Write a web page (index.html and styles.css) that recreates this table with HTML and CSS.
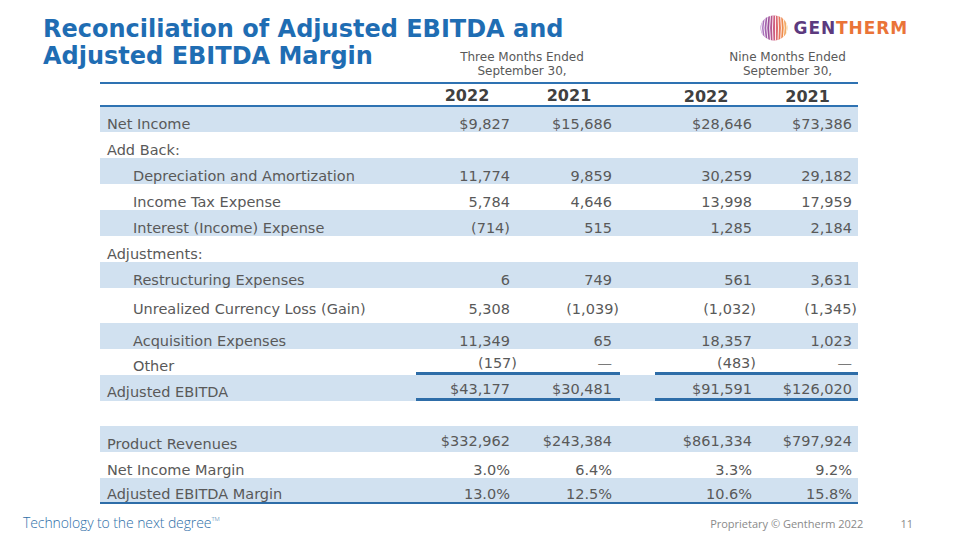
FILE: index.html
```html
<!DOCTYPE html>
<html lang="en">
<head>
<meta charset="utf-8">
<title>Reconciliation of Adjusted EBITDA</title>
<link rel="stylesheet" href="styles.css">
</head>
<body>
<div class="slide">
  <header class="top">
    <h1 class="title">Reconciliation of Adjusted EBITDA and<br>Adjusted EBITDA Margin</h1>
    <div class="logo">
      <svg class="sphere" width="28" height="26" viewBox="0 0 28 26">
        <defs>
          <clipPath id="ball"><ellipse cx="14" cy="13" rx="13.5" ry="12.5"/></clipPath>
          <linearGradient id="sg" x1="0" y1="0" x2="1" y2="0">
            <stop offset="0" stop-color="#b48ad0"/>
            <stop offset="0.3" stop-color="#9a4f9c"/>
            <stop offset="0.55" stop-color="#d9607a"/>
            <stop offset="0.8" stop-color="#ef8a4a"/>
            <stop offset="1" stop-color="#f6c77a"/>
          </linearGradient>
        </defs>
        <g clip-path="url(#ball)">
          <rect x="0" y="0" width="28" height="26" fill="url(#sg)"/>
          <g fill="none" stroke="#fff" stroke-width="0.9">
            <path d="M3 0 Q0 13 3 26"/>
            <path d="M5.5 0 Q2.5 13 5.5 26"/>
            <path d="M8 0 Q5.5 13 8 26"/>
            <path d="M10.5 0 Q8.8 13 10.5 26"/>
            <path d="M13 0 Q12 13 13 26"/>
            <path d="M15.5 0 Q15.5 13 15.5 26"/>
            <path d="M18 0 Q19 13 18 26"/>
            <path d="M20.5 0 Q22.3 13 20.5 26"/>
            <path d="M23 0 Q25.5 13 23 26"/>
            <path d="M25.5 0 Q28.5 13 25.5 26"/>
          </g>
        </g>
      </svg>
      <span class="brand"><span class="gen">GEN</span><span class="therm">THERM</span></span>
    </div>
  </header>

  <table class="recon">
    <colgroup>
      <col class="c-label">
      <col class="c-val">
      <col class="c-val">
      <col class="c-gap">
      <col class="c-val">
      <col class="c-val4">
    </colgroup>
    <thead>
      <tr class="period">
        <th></th>
        <th colspan="2" class="p3">Three Months Ended<br>September 30,</th>
        <th></th>
        <th colspan="2" class="p9">Nine Months Ended<br>September 30,</th>
      </tr>
      <tr class="years">
        <th></th>
        <th>2022</th>
        <th>2021</th>
        <th></th>
        <th class="low">2022</th>
        <th class="low">2021</th>
      </tr>
    </thead>
    <tbody>
      <tr class="band r25">
        <td class="lbl">Net Income</td>
        <td class="num">$9,827</td><td class="num">$15,686</td><td></td><td class="num">$28,646</td><td class="num">$73,386</td>
      </tr>
      <tr>
        <td class="lbl">Add Back:</td>
        <td></td><td></td><td></td><td></td><td></td>
      </tr>
      <tr class="band">
        <td class="ind">Depreciation and Amortization</td>
        <td class="num">11,774</td><td class="num">9,859</td><td></td><td class="num">30,259</td><td class="num">29,182</td>
      </tr>
      <tr>
        <td class="ind">Income Tax Expense</td>
        <td class="num">5,784</td><td class="num">4,646</td><td></td><td class="num">13,998</td><td class="num">17,959</td>
      </tr>
      <tr class="band">
        <td class="ind">Interest (Income) Expense</td>
        <td class="num">(714)</td><td class="num">515</td><td></td><td class="num">1,285</td><td class="num">2,184</td>
      </tr>
      <tr>
        <td class="lbl">Adjustments:</td>
        <td></td><td></td><td></td><td></td><td></td>
      </tr>
      <tr class="band">
        <td class="ind">Restructuring Expenses</td>
        <td class="num">6</td><td class="num">749</td><td></td><td class="num">561</td><td class="num">3,631</td>
      </tr>
      <tr class="tall">
        <td class="ind">Unrealized Currency Loss (Gain)</td>
        <td class="num">5,308</td><td class="num h">(1,039)</td><td></td><td class="num h">(1,032)</td><td class="num h">(1,345)</td>
      </tr>
      <tr class="band">
        <td class="ind">Acquisition Expenses</td>
        <td class="num">11,349</td><td class="num">65</td><td></td><td class="num">18,357</td><td class="num">1,023</td>
      </tr>
      <tr class="other">
        <td class="ind">Other</td>
        <td class="num h rule">(157)</td><td class="num rule dash">—</td><td></td><td class="num h rule">(483)</td><td class="num rule dash">—</td>
      </tr>
      <tr class="band total">
        <td class="lbl">Adjusted EBITDA</td>
        <td class="num rule">$43,177</td><td class="num rule">$30,481</td><td></td><td class="num rule">$91,591</td><td class="num rule">$126,020</td>
      </tr>
      <tr class="r25">
        <td></td><td></td><td></td><td></td><td></td><td></td>
      </tr>
      <tr class="band rev">
        <td class="lbl">Product Revenues</td>
        <td class="num">$332,962</td><td class="num">$243,384</td><td></td><td class="num">$861,334</td><td class="num">$797,924</td>
      </tr>
      <tr>
        <td class="lbl">Net Income Margin</td>
        <td class="num">3.0%</td><td class="num">6.4%</td><td></td><td class="num">3.3%</td><td class="num">9.2%</td>
      </tr>
      <tr class="band last">
        <td class="lbl">Adjusted EBITDA Margin</td>
        <td class="num">13.0%</td><td class="num">12.5%</td><td></td><td class="num">10.6%</td><td class="num">15.8%</td>
      </tr>
    </tbody>
  </table>

  <footer class="foot">
    <span class="tagline">Technology to the next degree<sup>TM</sup></span>
    <span class="meta"><span>Proprietary © Gentherm 2022</span><span class="page">11</span></span>
  </footer>
</div>
</body>
</html>
```

FILE: styles.css
```css
* { box-sizing: border-box; }
html, body { margin: 0; padding: 0; background: #fff; }
.slide {
  width: 960px;
  height: 540px;
  overflow: hidden;
  position: relative;
  font-family: "DejaVu Sans", Verdana, sans-serif;
  color: #595959;
}
.top {
  height: 50px;
  padding: 16px 50px 0 43px;
  display: flex;
  justify-content: space-between;
  align-items: flex-start;
}
.title {
  margin: 0;
  font-size: 24px;
  line-height: 27px;
  font-weight: bold;
  color: #1f6db3;
  letter-spacing: 0;
  white-space: nowrap;
}
.logo {
  display: flex;
  align-items: center;
  gap: 6px;
  margin-top: -1px;
  margin-right: 2px;
}
.sphere { display: block; }
.brand {
  font-family: "DejaVu Sans", sans-serif;
  font-weight: bold;
  font-size: 17px;
  letter-spacing: 0.9px;
  line-height: 26px;
}
.gen { color: #5c3a7e; }
.therm { color: #ea7438; }

.recon {
  margin-left: 100px;
  width: 758px;
  table-layout: fixed;
  border-collapse: separate;
  border-spacing: 0;
}
.c-label { width: 316px; }
.c-val { width: 102px; }
.c-gap { width: 35px; }
.c-val4 { width: 101px; }

.period th {
  height: 32px;
  padding: 0 0 4px 0;
  font-size: 12px;
  line-height: 14px;
  font-weight: normal;
  color: #595959;
  vertical-align: bottom;
  text-align: center;
}
.period .p3 { padding-left: 8px; }
.period .p9 { padding-left: 62px; }

.years th {
  height: 25px;
  padding: 2px 0 0 0;
  font-size: 16px;
  line-height: 16px;
  font-weight: bold;
  color: #404040;
  text-align: center;
  vertical-align: middle;
  border-top: 2px solid #2e72b2;
  border-bottom: 2px solid #2e72b2;
}
.years th.low { padding-top: 5px; }

.recon td {
  height: 26px;
  padding: 0;
  font-size: 14.5px;
  line-height: 15px;
  vertical-align: bottom;
  white-space: nowrap;
  color: #595959;
}
.recon tr.r25 td { height: 25px; }
.recon tr.band td { background: #d1e1f0; }
.recon td.lbl { padding-left: 7px; }
.recon td.ind { padding-left: 33px; }
.recon td.num { text-align: right; }
.recon td.num:nth-child(2) { padding-right: 8px; }
.recon td.num:nth-child(3) { padding-right: 8px; }
.recon td.num:nth-child(5) { padding-right: 5px; }
.recon td.num:nth-child(6) { padding-right: 6px; }
.recon td.num.h { padding-right: 1px; }
.recon tr.tall td { height: 35px; padding-bottom: 6px; }
.recon tr.other td, .recon tr.total td { padding-bottom: 1px; }
.recon td.rule { border-bottom: 3px solid #2e6da8; }
.recon td.dash { color: #7a7a7a; }
.recon tr.rev td.num { padding-bottom: 3px; }
.recon tr.last td { border-bottom: 2px solid #2e6da8; }

.foot {
  display: flex;
  justify-content: space-between;
  align-items: baseline;
  padding: 0 47px 0 23px;
  margin-top: 9px;
}
.tagline {
  font-family: "Open Sans", "Liberation Sans", sans-serif;
  font-weight: 300;
  font-size: 14px;
  letter-spacing: -0.1px;
  color: #2f6fa8;
}
.tagline sup {
  font-size: 6px;
  vertical-align: 7px;
  letter-spacing: 0;
}
.meta {
  display: flex;
  gap: 37px;
  font-family: "Open Sans", "Liberation Sans", sans-serif;
  font-size: 11px;
  color: #8a8a8a;
}
```
